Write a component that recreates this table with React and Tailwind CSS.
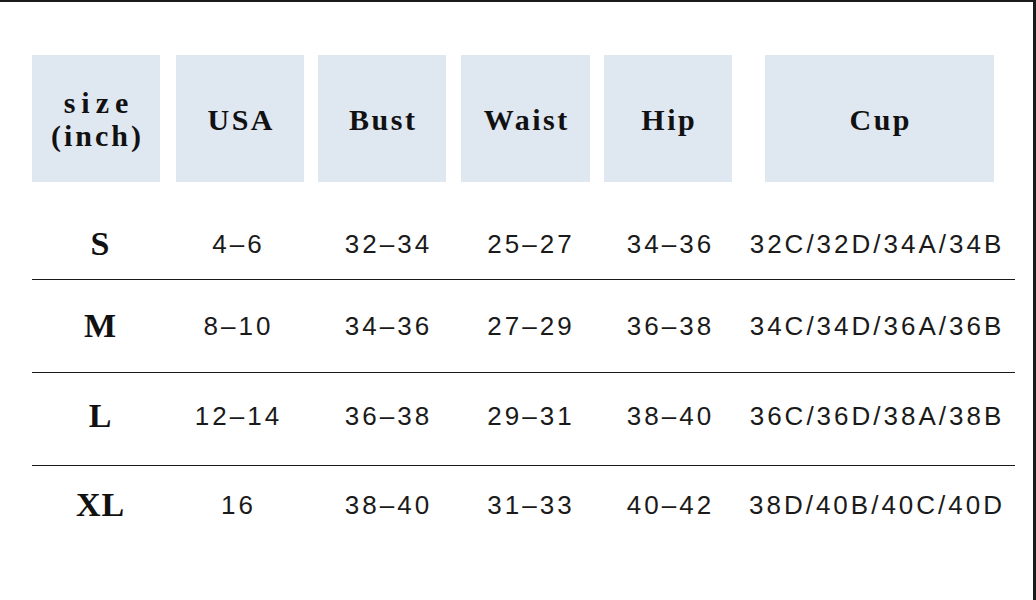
import React from "react";

const colCls = [
  "w-[128px]",
  "ml-[16px] w-[128px]",
  "ml-[14px] w-[128px]",
  "ml-[15px] w-[129px]",
  "ml-[14px] w-[128px]",
  "ml-[33px] w-[229px]",
];

const dataAdj = ["pl-[8px]", "pr-[6px]", "pl-[10px]", "pl-[8px]", "pl-[2px]", "pr-[8px]"];

const headers = ["USA", "Bust", "Waist", "Hip", "Cup"];

const rows = [
  { s: "S", v: ["4–6", "32–34", "25–27", "34–36", "32C/32D/34A/34B"], cls: "h-[98px] pt-[26px] border-b border-[#1a1a1a]" },
  { s: "M", v: ["8–10", "34–36", "27–29", "36–38", "34C/34D/36A/36B"], cls: "h-[93px] pt-[0px] border-b border-[#1a1a1a]" },
  { s: "L", v: ["12–14", "36–38", "29–31", "38–40", "36C/36D/38A/38B"], cls: "h-[93px] pb-[6px] border-b border-[#1a1a1a]" },
  { s: "XL", v: ["16", "38–40", "31–33", "40–42", "38D/40B/40C/40D"], cls: "h-[78px] pt-[0px]" },
];

const serif = { fontFamily: '"Liberation Serif", "Times New Roman", serif' };
const sans = { fontFamily: '"Liberation Sans", Arial, sans-serif' };

export default function App() {
  return (
    <div className="w-[1036px] h-[600px] overflow-hidden bg-white border-t-[2px] border-r-[3px] border-[#1b1b1b] box-border">
      <div className="pl-[32px] pt-[53px]">
        <div className="flex h-[127px]" style={serif}>
          <div className={`${colCls[0]} bg-[#dfe7f1] flex flex-col items-center justify-center text-[30px] font-bold text-[#111] leading-[33px]`}>
            <span className="tracking-[6px] mr-[-6px]">size</span>
            <span className="tracking-[3px] mr-[-3px]">(inch)</span>
          </div>
          {headers.map((h, i) => (
            <div
              key={h}
              className={`${colCls[i + 1]} bg-[#dfe7f1] flex items-center justify-center text-[30px] font-bold text-[#111] leading-none tracking-[2.5px]`}
            >
              <span className="mr-[-2.5px] pt-[2px]">{h}</span>
            </div>
          ))}
        </div>
        <div className="w-[983px]">
          {rows.map((r) => (
            <div key={r.s} className={`flex items-center box-border ${r.cls}`}>
              <div className={`${colCls[0]} ${dataAdj[0]} flex justify-center text-[34px] font-bold leading-none text-[#111] tracking-[1px]`} style={serif}>
                <span className="mr-[-1px]">{r.s}</span>
              </div>
              {r.v.map((v, i) => (
                <div
                  key={i}
                  className={`${colCls[i + 1]} ${dataAdj[i + 1]} flex justify-center text-[26px] leading-none text-[#1a1a1a] tracking-[3px] whitespace-nowrap`}
                  style={sans}
                >
                  <span className="mr-[-3px]">{v}</span>
                </div>
              ))}
            </div>
          ))}
        </div>
      </div>
    </div>
  );
}
